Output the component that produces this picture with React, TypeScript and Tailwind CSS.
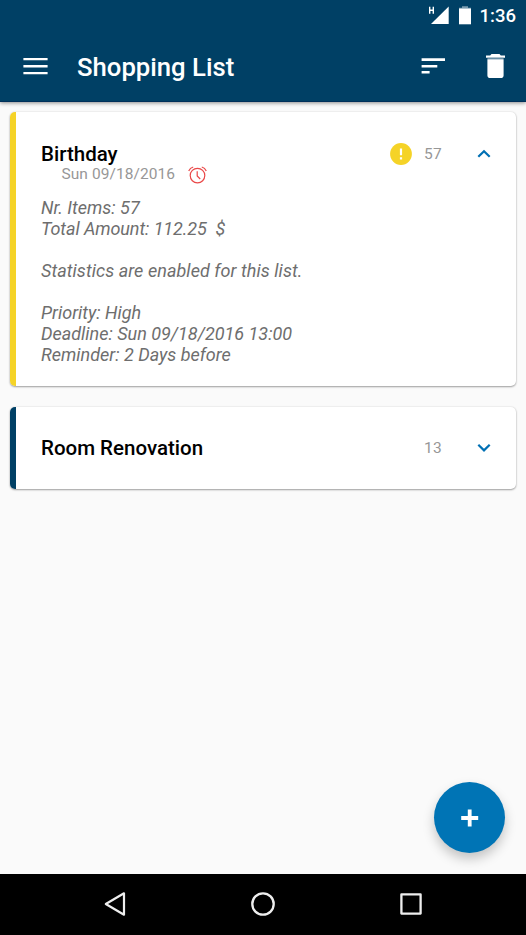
import type { ReactNode } from "react";

function StatusBar() {
  return (
    <div className="flex h-8 items-start justify-end pr-[10px] text-white">
      <svg className="mt-[6px] mr-[10px] h-[19px] w-[21px]" viewBox="0 0 21 19" fill="#fff">
        <path d="M20.700.5V18H3z" />
        <path d="M1.700.8v7M5.300.8v7M1.700 4.300h3.600" stroke="#fff" strokeWidth="1.400" fill="none" />
      </svg>
      <svg className="mt-[6px] mr-[9px] h-[19px] w-3" viewBox="0 0 12 19">
        <path d="M3 .3h6v1.500h3v1H0v-1h3z" fill="#7b9cb0" />
        <path d="M0 2.500h12V18.300H0z" fill="#fff" />
      </svg>
      <span className="mt-[6px] text-[18.500px] leading-5 font-medium">1:36</span>
    </div>
  );
}

function Toolbar() {
  return (
    <div className="flex h-[69px] items-center pl-[23px] pr-[21px]">
      <svg className="-mt-[2px] h-[18px] w-[25px]" viewBox="0 0 25 18" fill="#fff">
        <path d="M.4 1h24.200v2.300H.4zM.4 8.100h24.200v2.300H.4zM.4 15h24.200v2.300H.4z" />
      </svg>
      <h1 className="ml-[29px] grow text-[25.700px] leading-8 font-medium whitespace-pre text-white">Shopping List</h1>
      <svg className="-mt-[2px] mr-10 h-[18px] w-[25px]" viewBox="0 0 25 18" fill="#fff">
        <path d="M.6 1.300h23.400V3.900H.6zM.6 7.900h15.700v2.500H.6zM.6 14h8v2.600H.6z" />
      </svg>
      <svg className="-mt-[2px] h-6 w-[19px]" viewBox="0 0 19 24">
        <path d="M5.500 0h8l1.300 1.400H19v2.400H0V1.400h4.200z" fill="#fff" />
        <path d="M1.400 3.800h16.200v1.400H1.400z" fill="#668da4" />
        <path d="M1.400 5.200h16.200v16.200c0 1.500-1 2.600-2.600 2.600H4c-1.600 0-2.600-1.100-2.600-2.600z" fill="#fff" />
      </svg>
    </div>
  );
}

function Chevron({ up = false }: { up?: boolean }) {
  return (
    <svg className={up ? "-mt-px ml-[35px] h-3 w-[14px]" : "-mt-px ml-[35px] h-3 w-[14px]"} viewBox="0 0 14 12" fill="none" stroke="#0070b4" strokeWidth="2.200">
      <path d={up ? "M1.300 8.800 7 3.200l5.700 5.600" : "M1.300 2.800 7 8.400l5.700-5.600"} />
    </svg>
  );
}

function AlarmIcon() {
  return (
    <svg className="-mt-px ml-[13px] h-[18px] w-[19px]" viewBox="0 0 19 18" fill="none" stroke="#ea4848" strokeWidth="1.200">
      <circle cx="9.500" cy="9.600" r="7.300" />
      <path d="M9.200 5.300v4.700l3 3" />
      <path d="M.7 5C1.600 3 3 1.600 5.200 1M18.300 5C17.400 3 16 1.600 13.800 1" />
    </svg>
  );
}

type CardProps = {
  title: string;
  count: number;
  stripe: string;
  important?: boolean;
  open?: boolean;
  children?: ReactNode;
};

function ListCard({ title, count, stripe, important, open, children }: CardProps) {
  return (
    <section className="flex overflow-hidden rounded-[5px] bg-white shadow-[0_1px_2px_rgba(0,0,0,0.35),0_0_2px_rgba(0,0,0,0.12)]">
      <div className={`w-[5.500px] shrink-0 ${stripe}`} />
      <div className="grow pl-[25.500px]">
        <div className={`flex h-[82px] items-center pr-[25px] ${open ? "pt-[2px]" : ""}`}>
          <h2 className="grow text-[20.500px] leading-6 font-medium text-black">{title}</h2>
          {important && (
            <svg className="-mt-px mr-3 h-[22px] w-[22px]" viewBox="0 0 22 22">
              <circle cx="11" cy="11" r="10.900" fill="#f5d327" />
              <path d="M9.900 5.500h2.200v6.800H9.900zM9.900 14.300h2.200v2.300H9.900z" fill="#fff" />
            </svg>
          )}
          <span className="text-[15.500px] leading-5 tracking-[0.300px] text-[#979797]">{count}</span>
          <Chevron up={open} />
        </div>
        {children}
      </div>
    </section>
  );
}

function NavBar() {
  return (
    <nav className="flex h-[61px] items-center bg-black pl-[104px]">
      <svg className="-mt-px h-[26px] w-[22px]" viewBox="0 0 22 26" fill="none" stroke="#eee" strokeWidth="2.200" strokeLinejoin="round">
        <path d="M20 2.300v21.400L1.800 13z" />
      </svg>
      <svg className="-mt-px ml-[124px] h-[26px] w-[26px]" viewBox="0 0 26 26" fill="none" stroke="#eee" strokeWidth="2.300">
        <circle cx="13" cy="13" r="10.700" />
      </svg>
      <svg className="-mt-px ml-[124px] h-[22px] w-[22px]" viewBox="0 0 22 22" fill="none" stroke="#eee" strokeWidth="2.300" strokeLinejoin="round">
        <path d="M1.400 1.400h19.200v19.200H1.400z" />
      </svg>
    </nav>
  );
}

export default function App() {
  return (
    <div className="flex h-[935px] w-[526px] flex-col bg-[#fafafa] font-['Roboto',sans-serif]">
      <header className="h-[102px] shrink-0 border-b border-[#00305a] bg-[#004065] shadow-[0_1px_4px_rgba(0,0,0,0.45)]">
        <StatusBar />
        <Toolbar />
      </header>
      <main className="relative flex grow flex-col gap-[21px] px-[10px] pt-[10px]">
        <ListCard title="Birthday" count={57} stripe="bg-[#f5d327]" important open>
          <div className="-mt-[28px] flex h-[18px] items-center pl-[20.500px] text-[15.500px] tracking-[0.060px] text-[#979797]">
            <span>Sun 09/18/2016</span>
            <AlarmIcon />
          </div>
          <p className="mt-[13px] h-[189px] text-[18px] leading-[21px] whitespace-pre-line text-[#6e6e6e] italic">
            {"Nr. Items: 57\n"}
            <span className="tracking-[-0.080px]">{"Total Amount: 112.25 \u00a0$"}</span>
            {"\n\n"}
            <span className="tracking-[0.060px]">Statistics are enabled for this list.</span>
            {"\n\nPriority: High\nDeadline: Sun 09/18/2016 13:00\nReminder: 2 Days before"}
          </p>
        </ListCard>
        <ListCard title="Room Renovation" count={13} stripe="bg-[#004065]" />
        <button className="absolute top-[680px] left-[434px] flex h-[71px] w-[71px] items-center justify-center rounded-full bg-[#0074b5] shadow-[0_6px_12px_rgba(0,0,0,0.22)]">
          <svg className="h-[18px] w-[18px]" viewBox="0 0 18 18" stroke="#fff" strokeWidth="3.800">
            <path d="M8.700.5v17M.2 9h17" />
          </svg>
        </button>
      </main>
      <NavBar />
    </div>
  );
}
